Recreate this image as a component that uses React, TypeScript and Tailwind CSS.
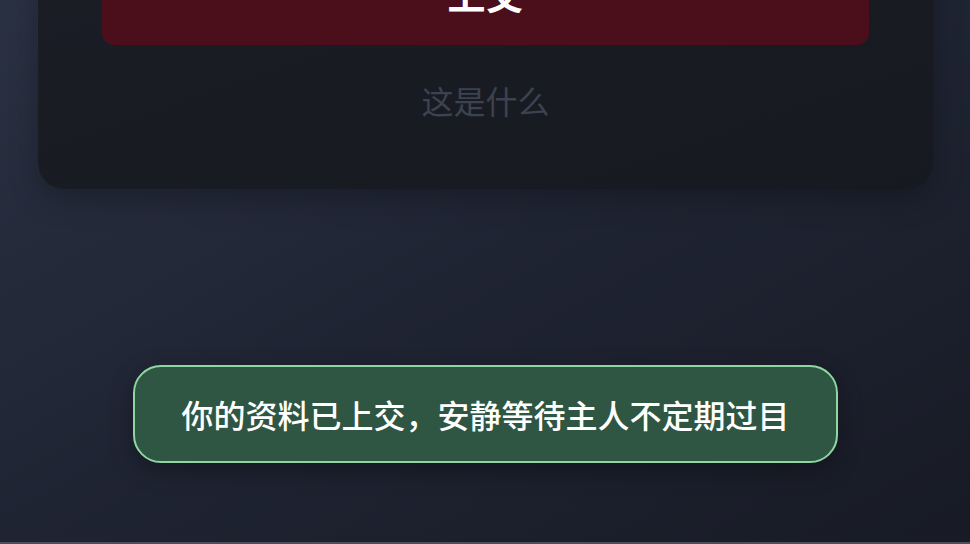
export default function App() {
    const cjk = { fontFamily: '"Noto Sans CJK SC", "Noto Sans", sans-serif' };

    return (
        <div
            className="relative h-[544px] w-[970px] overflow-hidden bg-gradient-to-br from-[#2a3142] via-[#1f2433] to-[#181b25] border-b-2 border-[#4a4f5a]"
            style={cjk}
        >
            {/* Scrolled content: submit card */}
            <div className="pl-[38px] pr-[37px] -mt-[120px]">
                <div className="rounded-[26px] bg-gradient-to-br from-[#1b1e26] to-[#16191f] px-[64px] pt-[60px] pb-[67px] shadow-[0_10px_30px_rgba(0,0,0,0.25)]">
                    <button className="flex h-[105px] w-full items-center justify-center rounded-[12px] bg-[#4a0f1a] text-[38px] font-bold text-white">
                        上交
                    </button>
                    <div className="mt-[33px] text-center text-[32px] leading-[44px] text-[#3c4250]">
                        这是什么
                    </div>
                </div>
            </div>

            {/* Toast */}
            <div className="absolute left-[133px] top-[365px] flex h-[98px] w-[705px] items-center justify-center rounded-[28px] border-2 border-[#8fd6a0] bg-[#2e5642] shadow-[0_8px_24px_rgba(0,0,0,0.3)]">
                <span className="text-[32px] font-medium text-white">
                    你的资料已上交，安静等待主人不定期过目
                </span>
            </div>
        </div>
    );
}
